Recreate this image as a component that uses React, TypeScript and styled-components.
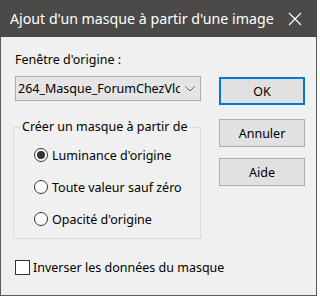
import React, { useState } from "react";
import styled, { createGlobalStyle } from "styled-components";

const GlobalStyle = createGlobalStyle`
  html, body {
    margin: 0;
    padding: 0;
    background: #ffffff;
  }
  body {
    font-family: "Noto Sans", "Open Sans", sans-serif;
  }
`;

const Window = styled.div`
  width: 317px;
  height: 296px;
  box-sizing: border-box;
  border: 1px solid #5a5a5a;
  border-top: none;
  background: #f0f0f0;
  display: flex;
  flex-direction: column;
`;

const TitleBar = styled.div`
  height: 37px;
  margin: 0 -1px;
  background: #4b4a48;
  color: #ffffff;
  display: flex;
  align-items: center;
  justify-content: space-between;
  padding: 0 15px 0 10px;
  font-size: 14.2px;
  white-space: nowrap;
  flex-shrink: 0;
`;

const Title = styled.span`
  padding-bottom: 1px;
`;

const CloseIcon = styled.svg`
  width: 14px;
  height: 14px;
  margin-top: 1px;
`;

const Body = styled.div`
  display: flex;
  padding: 0 0 0 14px;
  font-size: 12.5px;
  color: #000000;
  white-space: nowrap;
`;

const LeftCol = styled.div`
  width: 186px;
  display: flex;
  flex-direction: column;
`;

const FieldLabel = styled.div`
  margin-top: 14px;
  height: 18px;
  line-height: 18px;
`;

const Combo = styled.div`
  margin-top: 7px;
  height: 25px;
  box-sizing: border-box;
  border: 1px solid #adadad;
  background: #e5e5e5;
  display: flex;
  align-items: center;
  justify-content: space-between;
  padding: 0 5px 0 2px;
  overflow: hidden;
`;

const ComboText = styled.span`
  overflow: hidden;
  width: 162px;
`;

const Chevron = styled.svg`
  width: 10px;
  height: 6px;
  flex-shrink: 0;
`;

const Group = styled.fieldset`
  margin: 19px 0 0 -2px;
  padding: 10px 0 0 6px;
  width: 188px;
  height: 119px;
  box-sizing: border-box;
  border: 1px solid #dcdcdc;
  display: flex;
  flex-direction: column;
  gap: 10px;
`;

const Legend = styled.legend`
  padding: 0 2px;
  margin: 0;
  line-height: 14px;
`;

const RadioRow = styled.label`
  display: flex;
  align-items: center;
  gap: 4px;
  height: 22px;
  margin-left: 14px;
`;

const RadioCircle = styled.span<{ $checked: boolean }>`
  width: 14px;
  height: 14px;
  box-sizing: border-box;
  border-radius: 50%;
  border: 1px solid #333333;
  background: #ffffff;
  display: flex;
  align-items: center;
  justify-content: center;
  &::after {
    content: "";
    width: 8px;
    height: 8px;
    border-radius: 50%;
    background: ${(p) => (p.$checked ? "#333333" : "transparent")};
  }
`;

const CheckRow = styled.label`
  display: flex;
  align-items: center;
  gap: 3px;
  height: 15px;
  margin-top: 21px;
  width: 260px;
`;

const CheckBox = styled.span`
  width: 15px;
  height: 15px;
  box-sizing: border-box;
  border: 1px solid #333333;
  background: #ffffff;
`;

const RightCol = styled.div`
  margin-left: 18px;
  padding-top: 40px;
  display: flex;
  flex-direction: column;
`;

const Button = styled.button<{ $default?: boolean; $gap: number }>`
  width: 86px;
  height: 28px;
  margin-top: ${(p) => p.$gap}px;
  box-sizing: border-box;
  border: ${(p) => (p.$default ? "2px solid #0078d7" : "1px solid #adadad")};
  background: #e1e1e1;
  font-family: "Noto Sans", "Open Sans", sans-serif;
  font-size: 12.5px;
  color: #000000;
  padding: 0;
`;

const options = [
  "Luminance d'origine",
  "Toute valeur sauf zéro",
  "Opacité d'origine",
];

export default function App() {
  const [selected, setSelected] = useState(0);

  return (
    <>
      <GlobalStyle />
      <Window>
        <TitleBar>
          <Title>Ajout d'un masque à partir d'une image</Title>
          <CloseIcon viewBox="0 0 14 14">
            <path d="M1 1 L13 13 M13 1 L1 13" stroke="#ffffff" strokeWidth="1.2" />
          </CloseIcon>
        </TitleBar>
        <Body>
          <LeftCol>
            <FieldLabel>Fenêtre d'origine :</FieldLabel>
            <Combo>
              <ComboText>264_Masque_ForumChezVlc</ComboText>
              <Chevron viewBox="0 0 10 6">
                <path d="M0.5 0.5 L5 5 L9.5 0.5" fill="none" stroke="#606060" strokeWidth="1" />
              </Chevron>
            </Combo>
            <Group>
              <Legend>Créer un masque à partir de</Legend>
              {options.map((o, i) => (
                <RadioRow key={o} onClick={() => setSelected(i)}>
                  <RadioCircle $checked={selected === i} />
                  {o}
                </RadioRow>
              ))}
            </Group>
            <CheckRow>
              <CheckBox />
              Inverser les données du masque
            </CheckRow>
          </LeftCol>
          <RightCol>
            <Button $default $gap={0}>OK</Button>
            <Button $gap={14}>Annuler</Button>
            <Button $gap={11}>Aide</Button>
          </RightCol>
        </Body>
      </Window>
    </>
  );
}
